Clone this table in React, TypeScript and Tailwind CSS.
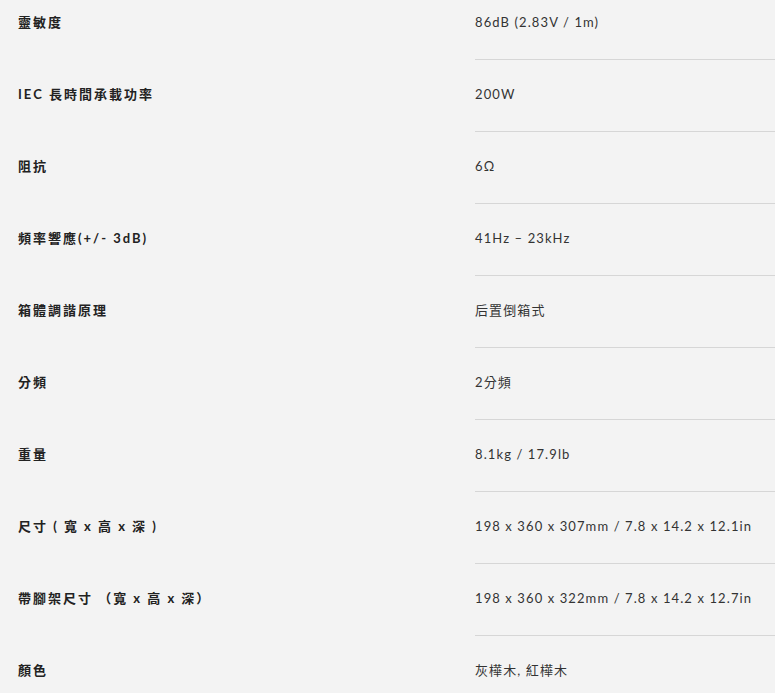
const specs: [string, string][] = [
  ['靈敏度', '86dB (2.83V / 1m)'],
  ['IEC 長時間承載功率', '200W'],
  ['阻抗', '6Ω'],
  ['頻率響應(+/- 3dB)', '41Hz – 23kHz'],
  ['箱體調諧原理', '后置倒箱式'],
  ['分頻', '2分頻'],
  ['重量', '8.1kg / 17.9lb'],
  ['尺寸 ( 寬 x 高 x 深 )', '198 x 360 x 307mm / 7.8 x 14.2 x 12.1in'],
  ['帶腳架尺寸 （寬 x 高 x 深）', '198 x 360 x 322mm / 7.8 x 14.2 x 12.7in'],
  ['顏色', '灰樺木, 紅樺木'],
]

export default function App() {
  return (
    <div
      className="h-[693px] w-full overflow-hidden bg-[#f3f3f3]"
      style={{ fontFamily: 'Lato, "Noto Sans CJK TC", sans-serif' }}
    >
      <div className="-mt-[12px]">
        {specs.map(([label, value], i) => (
          <div key={label} className="flex">
            <div className="flex h-[72px] w-[475px] shrink-0 items-center pb-[3px] pl-[18px] text-[13px] font-bold tracking-[2px] text-[#222]">
              {label}
            </div>
            <div
              className={`flex h-[72px] flex-1 items-center pb-[2px] text-[13px] tracking-[1.1px] text-[#333] ${
                i < specs.length - 1 ? 'border-b border-[#d6d6d6]' : ''
              }`}
            >
              {value}
            </div>
          </div>
        ))}
      </div>
    </div>
  )
}
